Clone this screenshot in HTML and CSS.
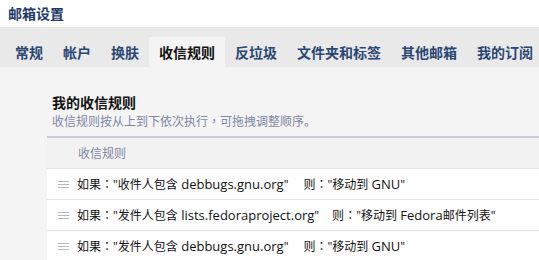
FILE: index.html
```
<!DOCTYPE html>
<html lang="zh-CN">
<head>
    <meta charset="UTF-8">
    <meta name="viewport" content="width=device-width, initial-scale=1.0">
    <title>邮箱设置</title>
    <link rel="stylesheet" href="styles.css">
</head>
<body>
    <div class="top">邮箱设置</div>

    <div class="tabs">
        <a class="tab">常规</a>
        <a class="tab">帐户</a>
        <a class="tab">换肤</a>
        <a class="tab active">收信规则</a>
        <a class="tab">反垃圾</a>
        <a class="tab">文件夹和标签</a>
        <a class="tab">其他邮箱</a>
        <a class="tab">我的订阅</a>
    </div>

    <div class="content">
        <h2>我的收信规则</h2>
        <p class="tip">收信规则按从上到下依次执行<span class="punct" lang="zh-TW">，</span>可拖拽调整顺序。</p>

        <div class="rules">
            <div class="rules-head">收信规则</div>
            <div class="rule">
                <span class="handle"></span>
                <span class="cond">如果<span class="punct" lang="zh-TW">：</span>"收件人包含<span class="en"> debbugs.gnu.org</span>"</span>
                <span class="then">则<span class="punct" lang="zh-TW">：</span>"移动到<span class="en"> GNU</span>"</span>
            </div>
            <div class="rule">
                <span class="handle"></span>
                <span class="cond">如果<span class="punct" lang="zh-TW">：</span>"发件人包含<span class="en"> lists.fedoraproject.org</span>"</span>
                <span class="then wide">则<span class="punct" lang="zh-TW">：</span>"移动到<span class="en"> Fedora</span>邮件列表"</span>
            </div>
            <div class="rule">
                <span class="handle"></span>
                <span class="cond">如果<span class="punct" lang="zh-TW">：</span>"发件人包含<span class="en"> debbugs.gnu.org</span>"</span>
                <span class="then">则<span class="punct" lang="zh-TW">：</span>"移动到<span class="en"> GNU</span>"</span>
            </div>
        </div>
    </div>
</body>
</html>
```

FILE: styles.css
```
body {
    margin: 0;
    padding: 0;
    background-color: #f4f4f4;
    font-family: "Noto Sans CJK SC", sans-serif;
    overflow: hidden;
}

.top {
    height: 27px;
    line-height: 27px;
    padding-left: 8px;
    background-color: #fff;
    color: #1e3a69;
    font-size: 14px;
    font-weight: bold;
}

.tabs {
    display: flex;
    height: 30px;
    padding: 10px 0 0 5px;
    background-color: #e9e9e9;
    white-space: nowrap;
}

.tab {
    padding: 0 10px;
    line-height: 30px;
    font-size: 14px;
    font-weight: bold;
    color: #2a4674;
}

.tab.active {
    background-color: #f4f4f4;
    color: #111;
}

.content {
    padding: 25px 0 0 47px;
}

h2 {
    margin: 0;
    padding-left: 5px;
    font-size: 14px;
    line-height: 20px;
    color: #111;
}

.tip {
    margin: 0;
    padding-left: 5px;
    font-size: 12px;
    line-height: 18px;
    color: #7d86a6;
}

/* centred full-width punctuation */
.punct {
    font-family: "Noto Sans CJK TC", sans-serif;
}

.rules {
    margin-top: 6px;
    border-top: 2px solid #c9cddb;
}

.rules-head {
    height: 30px;
    line-height: 30px;
    padding-left: 31px;
    background-color: #f2f2f2;
    font-size: 12px;
    color: #7d86a6;
}

.rule {
    display: flex;
    align-items: center;
    height: 30px;
    border-top: 1px solid #e4e4e4;
    background-color: #fff;
    font-family: "Open Sans", "Noto Sans CJK SC", sans-serif;
    font-size: 12px;
    color: #111;
    white-space: nowrap;
}

.rule .en {
    font-size: 13px;
}

.handle {
    width: 11px;
    height: 1px;
    margin: 0 8px 0 11px;
    background-color: #b8b8b8;
    box-shadow: 0 -3px 0 #b8b8b8, 0 3px 0 #b8b8b8;
}

.then {
    margin-left: 15px;
}

.then.wide {
    margin-left: 13px;
}
```
